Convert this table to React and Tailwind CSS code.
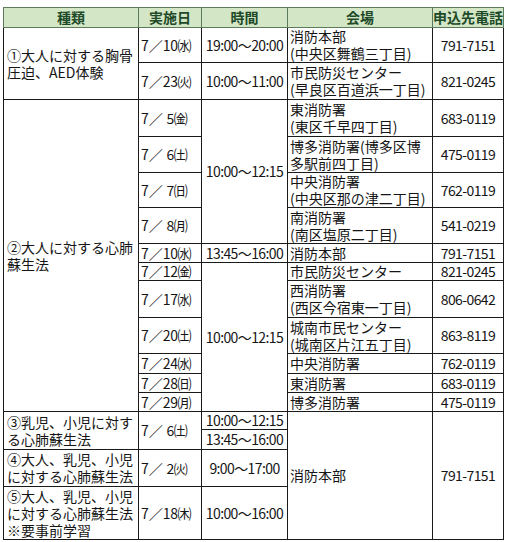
import React from "react";

const W = { 日: "㈰", 月: "㈪", 火: "㈫", 水: "㈬", 木: "㈭", 金: "㈮", 土: "㈯" };

function D({ d, w }) {
  return (
    <span className="whitespace-nowrap">
      7／
      {d.length === 1 ? (
        <span className="inline-block w-[11px] text-right tracking-[-0.4px]">{d}</span>
      ) : (
        <span className="tracking-[-0.4px]">{d}</span>
      )}
      {W[w]}
    </span>
  );
}

const td = "border border-[#1a1a1a] align-middle p-0";
const cType = `${td} pl-[3px] text-left`;
const cDate = `${td} pl-[2px] text-left`;
const cTime = `${td} text-center whitespace-nowrap tracking-[-0.6px]`;
const cVen = `${td} pl-[2px] text-left whitespace-nowrap`;
const cTel = `${td} text-center whitespace-nowrap tracking-[-0.6px]`;
const th =
  "border border-[#5d7a5d] bg-[#d3e6c6] text-[#1d4a28] font-bold text-center align-middle p-0";

export default function App() {
  return (
    <div className="w-[508px] h-[542px] bg-white pt-[7px] pl-[3px]">
      <table
        className="table-fixed border-collapse w-[501px] text-[14px] leading-[17px] text-[#151515]"
        style={{ fontFamily: '"Noto Sans CJK JP", "Noto Sans", sans-serif' }}
      >
        <colgroup>
          <col className="w-[135px]" />
          <col className="w-[63px]" />
          <col className="w-[86px]" />
          <col className="w-[145px]" />
          <col className="w-[71px]" />
        </colgroup>
        <tbody>
          <tr className="h-[20px]">
            <td className={th}>種類</td>
            <td className={th}>実施日</td>
            <td className={th}>時間</td>
            <td className={th}>会場</td>
            <td className={th}>申込先電話</td>
          </tr>
          <tr className="h-[35px]">
            <td className={cType} rowSpan={2}>
              ①大人に対する胸骨
              <br />
              圧迫、AED体験
            </td>
            <td className={cDate}><D d="10" w="水" /></td>
            <td className={cTime}>19:00～20:00</td>
            <td className={cVen}>消防本部<br />(中央区舞鶴三丁目)</td>
            <td className={cTel}>791-7151</td>
          </tr>
          <tr className="h-[37px]">
            <td className={cDate}><D d="23" w="火" /></td>
            <td className={cTime}>10:00～11:00</td>
            <td className={cVen}>市民防災センター<br />(早良区百道浜一丁目)</td>
            <td className={cTel}>821-0245</td>
          </tr>
          <tr className="h-[37px]">
            <td className={cType} rowSpan={11}>
              ②大人に対する心肺
              <br />
              蘇生法
            </td>
            <td className={cDate}><D d="5" w="金" /></td>
            <td className={cTime} rowSpan={4}>10:00～12:15</td>
            <td className={cVen}>東消防署<br />(東区千早四丁目)</td>
            <td className={cTel}>683-0119</td>
          </tr>
          <tr className="h-[36px]">
            <td className={cDate}><D d="6" w="土" /></td>
            <td className={cVen}>博多消防署(博多区博<br />多駅前四丁目)</td>
            <td className={cTel}>475-0119</td>
          </tr>
          <tr className="h-[35px]">
            <td className={cDate}><D d="7" w="日" /></td>
            <td className={cVen}>中央消防署<br />(中央区那の津二丁目)</td>
            <td className={cTel}>762-0119</td>
          </tr>
          <tr className="h-[36px]">
            <td className={cDate}><D d="8" w="月" /></td>
            <td className={cVen}>南消防署<br />(南区塩原二丁目)</td>
            <td className={cTel}>541-0219</td>
          </tr>
          <tr className="h-[19px]">
            <td className={cDate}><D d="10" w="水" /></td>
            <td className={cTime}>13:45～16:00</td>
            <td className={cVen}>消防本部</td>
            <td className={cTel}>791-7151</td>
          </tr>
          <tr className="h-[18px]">
            <td className={cDate}><D d="12" w="金" /></td>
            <td className={cTime} rowSpan={6}>10:00～12:15</td>
            <td className={cVen}>市民防災センター</td>
            <td className={cTel}>821-0245</td>
          </tr>
          <tr className="h-[37px]">
            <td className={cDate}><D d="17" w="水" /></td>
            <td className={cVen}>西消防署<br />(西区今宿東一丁目)</td>
            <td className={cTel}>806-0642</td>
          </tr>
          <tr className="h-[36px]">
            <td className={cDate}><D d="20" w="土" /></td>
            <td className={cVen}>城南市民センター<br />(城南区片江五丁目)</td>
            <td className={cTel}>863-8119</td>
          </tr>
          <tr className="h-[20px]">
            <td className={cDate}><D d="24" w="水" /></td>
            <td className={cVen}>中央消防署</td>
            <td className={cTel}>762-0119</td>
          </tr>
          <tr className="h-[19px]">
            <td className={cDate}><D d="28" w="日" /></td>
            <td className={cVen}>東消防署</td>
            <td className={cTel}>683-0119</td>
          </tr>
          <tr className="h-[19px]">
            <td className={cDate}><D d="29" w="月" /></td>
            <td className={cVen}>博多消防署</td>
            <td className={cTel}>475-0119</td>
          </tr>
          <tr className="h-[18px]">
            <td className={cType} rowSpan={2}>
              ③乳児、小児に対す
              <br />
              る心肺蘇生法
            </td>
            <td className={cDate} rowSpan={2}><D d="6" w="土" /></td>
            <td className={cTime}>10:00～12:15</td>
            <td className={cVen} rowSpan={4}>消防本部</td>
            <td className={cTel} rowSpan={4}>791-7151</td>
          </tr>
          <tr className="h-[20px]">
            <td className={cTime}>13:45～16:00</td>
          </tr>
          <tr className="h-[37px]">
            <td className={cType}>
              ④大人、乳児、小児
              <br />
              に対する心肺蘇生法
            </td>
            <td className={cDate}><D d="2" w="火" /></td>
            <td className={cTime}>9:00～17:00</td>
          </tr>
          <tr className="h-[53px]">
            <td className={cType}>
              ⑤大人、乳児、小児
              <br />
              に対する心肺蘇生法
              <br />
              ※要事前学習
            </td>
            <td className={cDate}><D d="18" w="木" /></td>
            <td className={cTime}>10:00～16:00</td>
          </tr>
        </tbody>
      </table>
    </div>
  );
}
